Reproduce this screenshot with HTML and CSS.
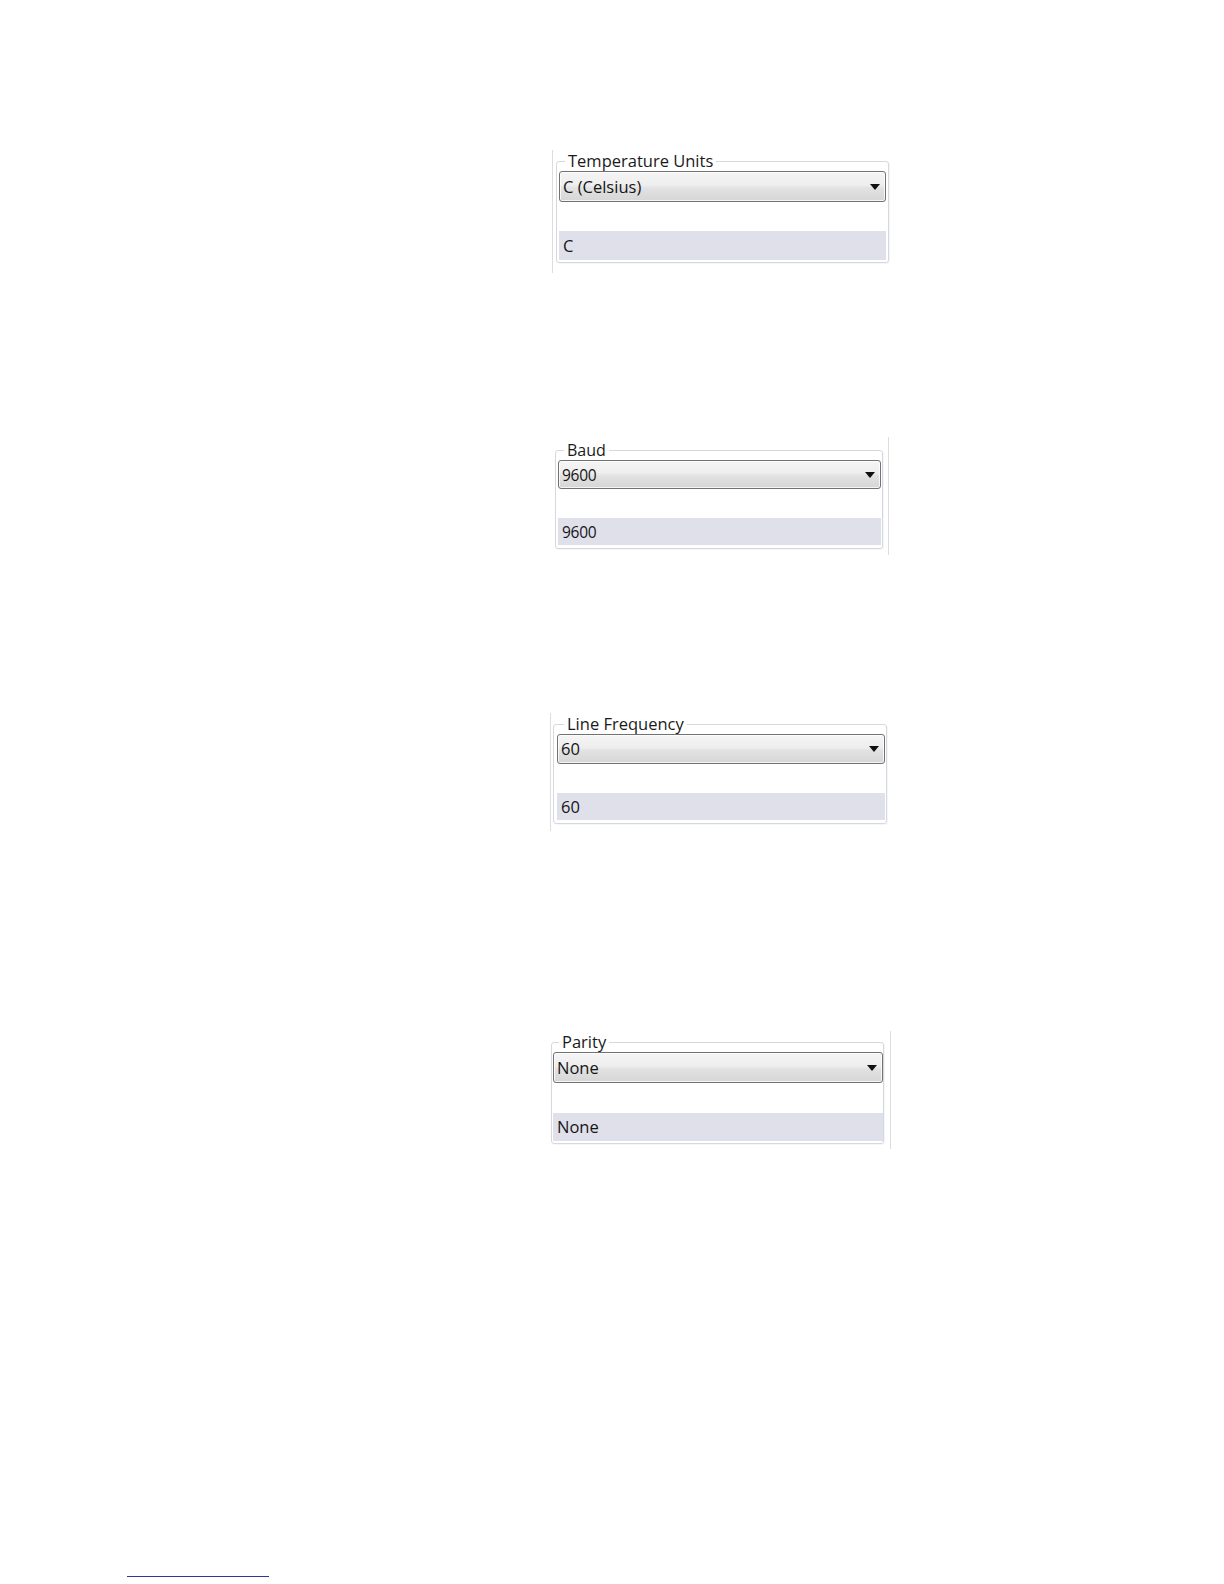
FILE: index.html
```html
<!DOCTYPE html>
<html lang="en">
<head>
<meta charset="utf-8">
<title>Settings</title>
<link rel="stylesheet" href="styles.css">
</head>
<body>
<main class="page">
  <section class="shot shot-1">
    <fieldset class="group">
      <legend class="group-label">Temperature Units</legend>
      <div class="combo"><span class="combo-text">C (Celsius)</span><span class="combo-arrow"></span></div>
      <div class="spacer"></div>
      <div class="row"><span class="row-text">C</span></div>
    </fieldset>
  </section>

  <section class="shot shot-2">
    <fieldset class="group">
      <legend class="group-label">Baud</legend>
      <div class="combo"><span class="combo-text">9600</span><span class="combo-arrow"></span></div>
      <div class="spacer"></div>
      <div class="row"><span class="row-text">9600</span></div>
    </fieldset>
  </section>

  <section class="shot shot-3">
    <fieldset class="group">
      <legend class="group-label">Line Frequency</legend>
      <div class="combo"><span class="combo-text">60</span><span class="combo-arrow"></span></div>
      <div class="spacer"></div>
      <div class="row"><span class="row-text">60</span></div>
    </fieldset>
  </section>

  <section class="shot shot-4">
    <fieldset class="group">
      <legend class="group-label">Parity</legend>
      <div class="combo"><span class="combo-text">None</span><span class="combo-arrow"></span></div>
      <div class="spacer"></div>
      <div class="row"><span class="row-text">None</span></div>
    </fieldset>
  </section>

  <div class="footnote-rule"></div>
</main>
</body>
</html>
```

FILE: styles.css
```css
html, body {
  margin: 0;
  padding: 0;
  background: #ffffff;
}

body {
  font-family: "Open Sans", "DejaVu Sans", sans-serif;
  color: #151515;
}

.page {
  padding-top: 150px;
  display: flex;
  flex-direction: column;
  align-items: flex-start;
}

.shot {
  box-sizing: border-box;
  display: flex;
  flex-direction: column;
}

.group {
  margin: 0;
  min-width: 0;
  border: 1px solid #d3d9de;
  border-radius: 3px;
  box-shadow: inset 1px 1px 0 #ffffff, 1px 1px 0 #f4f6f7;
  display: flex;
  flex-direction: column;
}

.group-label {
  padding: 0 3px;
  margin-left: 6px;
  font-size: 16.5px;
  line-height: 20px;
  color: #1a1a1a;
}

.combo {
  box-sizing: border-box;
  position: relative;
  display: flex;
  align-items: center;
  border: 1px solid #727272;
  border-radius: 3px;
  background: linear-gradient(to bottom, #f5f5f5 0%, #eeeeee 45%, #e2e2e2 55%, #d6d6d6 100%);
  box-shadow: inset 0 0 0 1px rgba(255, 255, 255, 0.75);
  padding-left: 3px;
}

.combo-text {
  font-size: 16.5px;
  line-height: 20px;
  color: #151515;
}

.combo-arrow {
  position: absolute;
  right: 5px;
  top: 50%;
  margin-top: -3px;
  width: 0;
  height: 0;
  border-left: 5px solid transparent;
  border-right: 5px solid transparent;
  border-top: 6px solid #111111;
}

.row {
  box-sizing: border-box;
  display: flex;
  align-items: center;
  background: #e0e0ea;
  padding-left: 4px;
}

.row-text {
  font-size: 16.5px;
  line-height: 20px;
  color: #151515;
}

/* Shot 1: Temperature Units */
.shot-1 {
  margin-left: 552px;
  width: 337px;
  border-left: 1px solid #dddddd;
  padding: 1px 0 10px 3px;
}
.shot-1 .group { padding: 0 2px 2px 2px; }
.shot-1 .combo { height: 31px; }
.shot-1 .spacer { height: 29px; }
.shot-1 .row { height: 29px; }

/* Shot 2: Baud */
.shot-2 {
  margin-top: 164px;
  margin-left: 555px;
  width: 334px;
  border-right: 1px solid #dddddd;
  padding: 3px 5px 6px 0;
}
.shot-2 .group { padding: 0 1px 3px 2px; }
.shot-2 .group-label { font-size: 16px; }
.shot-2 .combo { height: 29px; }
.shot-2 .combo-text,
.shot-2 .row-text { font-size: 15.5px; letter-spacing: -0.3px; }
.shot-2 .spacer { height: 29px; }
.shot-2 .row { height: 27px; }

/* Shot 3: Line Frequency */
.shot-3 {
  margin-top: 158px;
  margin-left: 550px;
  width: 337px;
  border-left: 1px solid #dddddd;
  padding: 1px 0 7px 2px;
}
.shot-3 .group { padding: 0 1px 3px 3px; }
.shot-3 .group-label { margin-left: 7px; }
.shot-3 .combo { height: 30px; }
.shot-3 .spacer { height: 29px; }
.shot-3 .row { height: 27px; }

/* Shot 4: Parity */
.shot-4 {
  margin-top: 200px;
  margin-left: 551px;
  width: 340px;
  border-right: 1px solid #dddddd;
  padding: 1px 6px 5px 0;
}
.shot-4 .group { padding: 0 0 2px 1px; }
.shot-4 .group-label { margin-left: 6px; }
.shot-4 .combo { height: 31px; }
.shot-4 .spacer { height: 30px; }
.shot-4 .row { height: 28px; }

.footnote-rule {
  margin-top: 427px;
  margin-left: 127px;
  width: 142px;
  border-top: 1px solid #2c3a9c;
}
```
